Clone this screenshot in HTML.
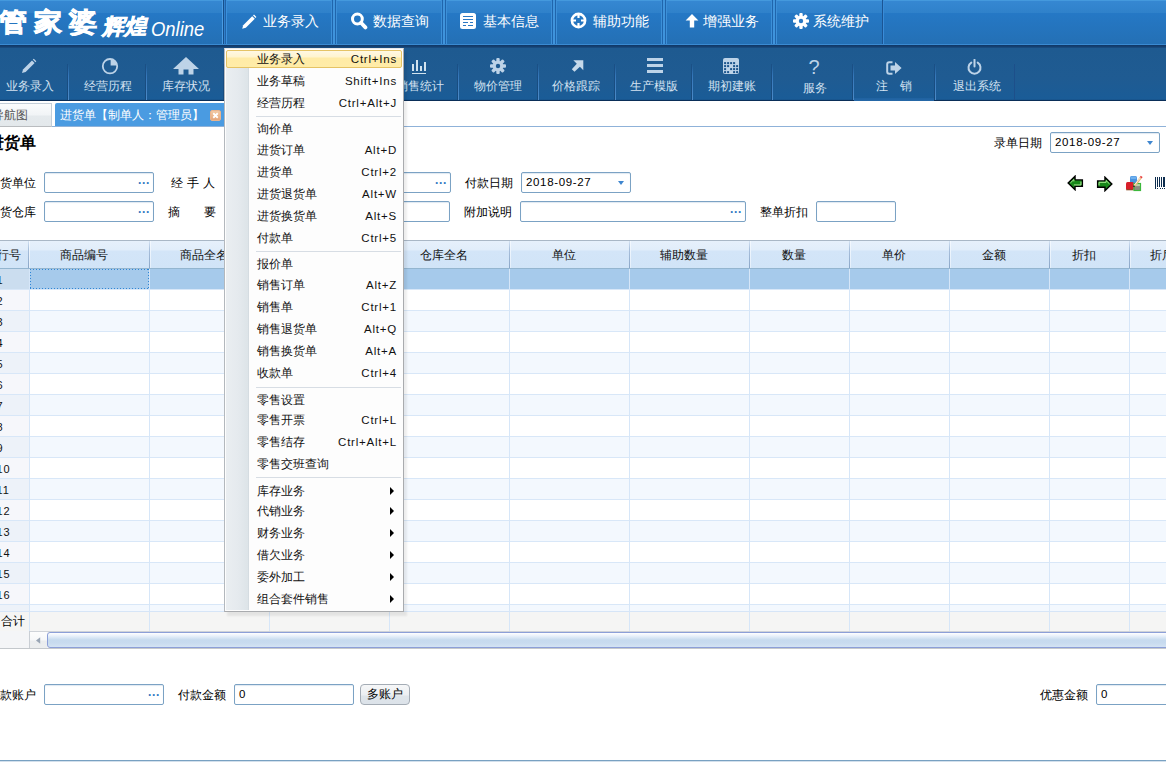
<!DOCTYPE html>
<html lang="zh">
<head>
<meta charset="utf-8">
<title>管家婆 辉煌 Online</title>
<style>
*{box-sizing:border-box;margin:0;padding:0}
html,body{width:1166px;height:781px;overflow:hidden;background:#fff}
body{position:relative;font-family:"Liberation Sans",sans-serif;font-size:12px;color:#000}
.abs{position:absolute}
/* ---------- top bar ---------- */
#top{position:absolute;left:0;top:0;width:1166px;height:45px;
 background:linear-gradient(to bottom,#4499dd 0,#4499dd 1px,#3587d2 1px,#2f81ca 13px,#2578c5 13px,#2470b5 44px,#3a8ad2 44px,#3a8ad2 45px)}
#topline{position:absolute;left:0;top:45px;width:1166px;height:3px;background:linear-gradient(to bottom,#0f3765 0,#143f70 1.500px,#1a4f83 3px)}
.vsep{position:absolute;top:0;height:44px;width:6px;margin-left:-1px;background:linear-gradient(to right,#3c90d8 0,#3c90d8 1px,#2065ac 1px,#2065ac 2px,#3f94dc 2px,#3f94dc 4px,#2065ac 4px,#2065ac 5px,#3c90d8 5px,#3c90d8 6px)}
.nav{position:absolute;top:0;height:44px;color:#fff;font-size:14px;line-height:16px;white-space:nowrap}
.nav span{position:absolute;top:13px}
.nav svg{position:absolute}
#logo1{position:absolute;left:-1px;top:3.500px;font-size:27.500px;line-height:38px;font-weight:bold;color:#fff;letter-spacing:7px;white-space:nowrap;-webkit-text-stroke:1px #fff;transform:scaleY(0.930);transform-origin:0 50%}
#logo2{position:absolute;left:102px;top:14px;font-size:22px;line-height:26px;font-weight:bold;font-style:italic;color:#fff;white-space:nowrap;-webkit-text-stroke:0.600px #fff}
#logo3{position:absolute;left:151px;top:17px;font-size:20px;line-height:24px;font-style:italic;color:#fff;white-space:nowrap;transform:scaleX(0.920);transform-origin:0 0}
/* ---------- second toolbar ---------- */
#tb2{position:absolute;left:0;top:48px;width:1166px;height:53px;background:linear-gradient(to bottom,#1e5a90 0,#1f5b92 30px,#1a5c97 51px,#164f86 52px,#0a2e58 52px,#0a2e58 53px)}
.t2{margin:0 0 0 0.500px;position:absolute;top:30px;height:16px;line-height:16px;font-size:12px;color:#d3e2f1;text-align:center;width:78px;white-space:nowrap}
.t2sep{position:absolute;top:16px;height:36px;width:2px;background:linear-gradient(to bottom,#1b5086,#174a7c) 0 0/1px 100% no-repeat,linear-gradient(to bottom,rgba(70,135,200,0) 0,#3577ba 12px,#4d8bc8 36px) 1px 0/1px 100% no-repeat}
.ic{position:absolute}
/* ---------- tabs ---------- */
#tab1{position:absolute;left:-27px;top:103px;width:79px;height:24px;border:1px solid #c3ced8;border-bottom:1px solid #b9bcbf;background:linear-gradient(to bottom,#fbfcfd 0,#f1f4f6 11px,#e5eaed 12px,#e3e8eb 23px);color:#555;font-size:12px;line-height:22px;padding-left:18px;white-space:nowrap}
#tab2{position:absolute;left:55px;top:103px;width:180px;height:24px;background:#4a9be1;border-radius:2px 0 0 0;color:#fff;font-size:12px;line-height:24.500px;padding-left:5px;white-space:nowrap}
#tabline{position:absolute;left:52px;top:126px;width:1114px;height:1px;background:#8fb2d9}
#tabx{position:absolute;left:210px;top:110px;width:11px;height:11px;border-radius:2px;background:linear-gradient(to bottom,#f1c9a5,#e5a67a);border:1px solid #e9b48d}
/* ---------- form ---------- */
.lbl{position:absolute;font-size:12px;line-height:16px;color:#000;white-space:nowrap}
.inp{position:absolute;height:21px;border:1px solid #7ba2c4;border-radius:2px;background:#fff;font-size:11.5px;line-height:19px;padding-left:4px;color:#000;white-space:nowrap;box-shadow:inset 0 1px 1px #dfe8f1}
.dots{position:absolute;right:3px;top:1.500px;color:#2f78c2;font-weight:bold;font-size:12px;letter-spacing:0px;line-height:17px}
.dd{position:absolute;right:6px;top:8px;width:0;height:0;border-left:3.800px solid transparent;border-right:3.800px solid transparent;border-top:4px solid #3f86cf}
#title{position:absolute;left:-12px;top:133px;font-size:16px;font-weight:bold;line-height:20px;white-space:nowrap}

/* ---------- grid ---------- */
#grid{position:absolute;left:0;top:0;width:1166px;height:0}
#ghead{position:absolute;left:0;top:240px;width:1166px;height:29px;border-top:1px solid #a9b7c6;border-bottom:1px solid #93b5cf;background:linear-gradient(to bottom,#e6f0fb 0,#e1edfa 9px,#d3e5f8 10px,#d1e4f7 27px)}
.gh{position:absolute;top:0;height:27px;line-height:28px;font-size:12px;text-align:center;padding-right:12px;white-space:nowrap;color:#111}
.gh:after{content:"";position:absolute;right:-1px;top:0;width:2px;height:27px;background:linear-gradient(to bottom,#d3e2f3 0,#a9c0dc 8px,#8ba7c8 27px) 0 0/1px 100% no-repeat,linear-gradient(to bottom,#f3f8fe,#e4effb) 1px 0/1px 100% no-repeat}
.gr{position:absolute;left:0;width:1166px;height:21px;border-bottom:1px solid #d8e7f8;background:#fff}
.gr.odd{background:#f3f8fe}
.gr.sel{background:#a6caeb}
.gr .rn{position:absolute;left:-4px;top:0;width:34px;height:20px;line-height:22px;font-size:11px;letter-spacing:0.900px;background:#f6f7fb;color:#111;padding-left:0.500px}
.gr.odd .rn{background:#edf2f9}
.gr.sel .rn{background:#cbddef}
#gsum{position:absolute;left:0;top:611px;width:1166px;height:20px;background:#f5f5f4;border-top:1px solid #d6e5f7}
#gsum span{position:absolute;left:1px;top:1px;font-size:12px;line-height:16px}
#gvl i{position:absolute;top:269px;width:1px;height:362px;background:#d6e6f8}
#gfocus{position:absolute;left:30px;top:269px;width:119px;height:20px;background:repeating-linear-gradient(to right,#2f86d6 0,#2f86d6 1.500px,transparent 1.500px,transparent 3px) 0 0/100% 1px no-repeat,repeating-linear-gradient(to right,#2f86d6 0,#2f86d6 1.500px,transparent 1.500px,transparent 3px) 0 100%/100% 1px no-repeat,repeating-linear-gradient(to bottom,#2f86d6 0,#2f86d6 1.500px,transparent 1.500px,transparent 3px) 0 0/1px 100% no-repeat,repeating-linear-gradient(to bottom,#2f86d6 0,#2f86d6 1.500px,transparent 1.500px,transparent 3px) 100% 0/1px 100% no-repeat}
#gscroll{position:absolute;left:0;top:631px;width:1166px;height:18px;background:#f4f4f3;border-top:1px solid #cfd3d8;border-bottom:1px solid #c4c8cc}
#gsl{position:absolute;left:0;top:-1px;width:30px;height:17px;background:#f4f5f7;border-right:1px solid #c9ced4}
#gsb{position:absolute;left:30px;top:0;width:17px;height:16px;background:linear-gradient(to bottom,#fdfdfd 0,#f7f8f9 8px,#ebedef 9px,#eceeef 16px)}
#gst{position:absolute;left:47px;top:0;width:1140px;height:16px;border:1px solid #8c9fd8;border-radius:3px;background:linear-gradient(to bottom,#ffffff 0,#e8f0fa 3px,#c6daee 7px,#c8dbef 10px,#d3e3f3 14px)}
#btn{position:absolute;left:360px;top:684px;width:50px;height:21px;border:1px solid #a4acb5;border-radius:4px;background:linear-gradient(to bottom,#f6f7f8 0,#eceff2 10px,#dfe5ea 11px,#dbe2e9 20px);font-size:12px;line-height:19px;text-align:center;white-space:nowrap}

/* ---------- menu ---------- */
#menu{position:absolute;left:224px;top:48px;width:180px;height:564px;background:#fdfdfd;border:1px solid #a9abae;border-left-color:#b3b8bd;border-top-color:#e8e8e8;box-shadow:3px 4px 2px rgba(0,0,0,.07)}
#mgut{position:absolute;left:1px;top:2px;width:23px;height:559px;background:linear-gradient(to right,#eaeef1 0,#e5eaee 12px,#dde4e8 22px,#ccd4da 23px)}
#mhi{position:absolute;left:1px;top:1px;width:176px;height:18px;border:1px solid #e5c365;border-radius:2px;background:linear-gradient(to bottom,#fff8e4 0,#fff4cf 6px,#ffeba6 7px,#ffeca8 16px)}
.mi{position:absolute;left:0;width:178px;height:18px;line-height:18px;font-size:12px;color:#111;white-space:nowrap}
.mt{position:absolute;left:32px;top:-1px}
.mk{position:absolute;right:6px;top:-1px;font-size:11.500px;letter-spacing:0.780px}
.marr{position:absolute;left:165px;top:4px;width:0;height:0;border-top:4px solid transparent;border-bottom:4px solid transparent;border-left:4.300px solid #000}
.msep{position:absolute;left:31px;width:145px;height:1px;background:#d7dde4}
</style>
</head>
<body>
<!-- top bar -->
<div id="top">
 <div id="logo1">管家婆</div>
 <div id="logo2">辉煌</div>
 <div id="logo3">Online</div>
</div>
<div id="topline"></div>
<!-- top nav -->
<div class="abs" style="left:222px;top:0;width:5px;height:44px;background:linear-gradient(to right,#4a9ce4 0,#4a9ce4 1px,#174f8a 1px,#174f8a 2px,#3080cc 2px,#3080cc 3px,#2263a8 3px,#2263a8 4px,#3a90dc 4px,#3a90dc 5px)"></div>
<div class="vsep" style="left:332px"></div>
<div class="vsep" style="left:442px"></div>
<div class="vsep" style="left:552px"></div>
<div class="vsep" style="left:662px"></div>
<div class="vsep" style="left:772px"></div>
<div class="abs" style="left:882px;top:0;width:2px;height:44px;background:linear-gradient(to right,#1b5594 0,#1b5594 1px,#3a8cd8 1px,#3a8cd8 2px)"></div>
<div class="nav" style="left:226px;width:106px">
 <svg style="left:15px;top:14px" width="16" height="16" viewBox="0 0 16 16"><path d="M1.2 14.8 L2.2 11.2 L11.2 2.2 L13.8 4.8 L4.8 13.8 Z" fill="#fff"/><path d="M12 1.4 L13 0.6 L15.4 3 L14.6 4 Z" fill="#fff"/></svg>
 <span style="left:37px">业务录入</span></div>
<div class="nav" style="left:336px;width:106px">
 <svg style="left:15px;top:12px" width="17" height="18" viewBox="0 0 17 18"><circle cx="6.400" cy="7" r="4.900" fill="none" stroke="#fff" stroke-width="3"/><path d="M10 10.800 L14.400 15.400" stroke="#fff" stroke-width="3.800" stroke-linecap="round"/></svg>
 <span style="left:37px">数据查询</span></div>
<div class="nav" style="left:446px;width:106px">
 <svg style="left:14px;top:13px" width="16" height="16" viewBox="0 0 16 16"><rect x="0" y="0" width="16" height="16" rx="2.5" fill="#fff"/><path d="M3 3.5h10M3 6.5h10M3 9.5h5M10 9.5h3M3 12.5h3M8 12.5h5" stroke="#2a78c4" stroke-width="1.2"/></svg>
 <span style="left:37px">基本信息</span></div>
<div class="nav" style="left:556px;width:106px">
 <svg style="left:14px;top:12px" width="17" height="17" viewBox="0 0 17 17"><circle cx="8.5" cy="8.5" r="6.6" fill="none" stroke="#fff" stroke-width="2.6"/><path d="M8.5 1v5M8.5 11v5M1 8.500h5M11 8.5h5" stroke="#fff" stroke-width="2.2"/></svg>
 <span style="left:37px">辅助功能</span></div>
<div class="nav" style="left:666px;width:106px">
 <svg style="left:19px;top:14px" width="14" height="14" viewBox="0 0 14 14"><path d="M7 0 L13.4 6.6 H9.2 V13.4 H4.800 V6.6 H0.6 Z" fill="#fff"/></svg>
 <span style="left:37px">增强业务</span></div>
<div class="nav" style="left:776px;width:106px">
 <svg style="left:17px;top:13px" width="16" height="16" viewBox="0 0 16 16"><g fill="#fff"><circle cx="8" cy="8" r="5.3"/><g id="tg"><rect x="6.3" y="0" width="3.4" height="16" rx="1"/></g><rect x="6.3" y="0" width="3.4" height="16" rx="1" transform="rotate(45 8 8)"/><rect x="6.3" y="0" width="3.4" height="16" rx="1" transform="rotate(90 8 8)"/><rect x="6.3" y="0" width="3.4" height="16" rx="1" transform="rotate(135 8 8)"/></g><circle cx="8" cy="8" r="2.2" fill="#2a78c4"/></svg>
 <span style="left:37px">系统维护</span></div>

<!-- second toolbar -->
<div id="tb2">
 <div class="t2sep" style="left:67px"></div>
 <div class="t2sep" style="left:145px"></div>
 <div class="t2sep" style="left:223px"></div>
 <div class="t2sep" style="left:301px"></div>
 <div class="t2sep" style="left:379px"></div>
 <div class="t2sep" style="left:457px"></div>
 <div class="t2sep" style="left:537px"></div>
 <div class="t2sep" style="left:614px"></div>
 <div class="t2sep" style="left:691px"></div>
 <div class="t2sep" style="left:771px"></div>
 <div class="t2sep" style="left:852px"></div>
 <div class="t2sep" style="left:934px"></div>
 <div class="t2sep" style="left:1014px;background:#1d4f8a;width:1px"></div>
 <div class="abs" style="left:854px;top:50px;width:80px;height:3px;background:linear-gradient(to bottom,#1f62a0,#2668a8)"></div>
 <div class="t2" style="left:-10px;top:30px">业务录入</div>
 <div class="t2" style="left:68px;top:30px">经营历程</div>
 <div class="t2" style="left:146px;top:30px">库存状况</div>
 <div class="t2" style="left:224px;top:30px">往来状况</div>
 <div class="t2" style="left:302px;top:30px">销售单</div>
 <div class="t2" style="left:380px;top:30px">销售统计</div>
 <div class="t2" style="left:458px;top:30px">物价管理</div>
 <div class="t2" style="left:536px;top:30px">价格跟踪</div>
 <div class="t2" style="left:614px;top:30px">生产模版</div>
 <div class="t2" style="left:692px;top:30px">期初建账</div>
 <div class="t2" style="left:775px;top:32px">服务</div>
 <div class="t2" style="left:854px;top:30px">注　销</div>
 <div class="t2" style="left:937px;top:30px">退出系统</div>
 <svg class="ic" style="left:21px;top:10px" width="16" height="16" viewBox="0 0 16 16"><path d="M1 15 L2 11.4 L11 2.400 L13.600 5 L4.600 14 Z" fill="#bdd3e8"/><path d="M11.800 1.600 L12.800 0.700 L15.300 3.200 L14.400 4.200 Z" fill="#bdd3e8"/></svg>
 <svg class="ic" style="left:101px;top:9px" width="18" height="18" viewBox="0 0 18 18"><circle cx="9" cy="9.200" r="7.200" fill="none" stroke="#bdd3e8" stroke-width="1.800"/><path d="M9.600 8.600 V2.200 A7 7 0 0 1 16 8.600 Z" fill="#bdd3e8"/></svg>
 <svg class="ic" style="left:173px;top:9px" width="26" height="18" viewBox="0 0 26 18"><path d="M13 0 L26 12 H20.500 V17.500 H15.500 V12.500 H10.500 V17.500 H5.500 V12 H0 Z" fill="#bdd3e8"/></svg>
 <svg class="ic" style="left:412px;top:12px" width="14" height="14" viewBox="0 0 14 14" shape-rendering="crispEdges"><g fill="#d2e3ef"><rect x="0" y="4" width="2" height="7"/><rect x="4" y="0" width="2" height="11"/><rect x="8" y="6" width="2" height="5"/><rect x="12" y="2" width="2" height="9"/><rect x="0" y="13" width="14" height="1"/></g></svg>
 <svg class="ic" style="left:490px;top:10px" width="16" height="16" viewBox="0 0 16 16"><g fill="#bdd3e8"><circle cx="8" cy="8" r="5.300"/><rect x="6.300" y="0" width="3.400" height="16" rx="1"/><rect x="6.300" y="0" width="3.400" height="16" rx="1" transform="rotate(45 8 8)"/><rect x="6.300" y="0" width="3.400" height="16" rx="1" transform="rotate(90 8 8)"/><rect x="6.300" y="0" width="3.400" height="16" rx="1" transform="rotate(135 8 8)"/></g><circle cx="8" cy="8" r="2.200" fill="#1f5b91"/></svg>
 <svg class="ic" style="left:571px;top:11.500px" width="13" height="12" viewBox="0 0 13 12"><path d="M2.300 0.200 H12.300 V10.200 L8.900 6.800 L3.500 11.800 L0.800 9.200 L5.800 3.700 Z" fill="#c6d9ea"/></svg>
 <svg class="ic" style="left:647px;top:10px" width="16" height="15" viewBox="0 0 16 15"><path d="M0 1.600h16M0 7.500h16M0 13.400h16" stroke="#bdd3e8" stroke-width="3"/></svg>
 <svg class="ic" style="left:723px;top:10px" width="16" height="16" viewBox="0 0 16 16"><rect x="0" y="0" width="16" height="16" rx="2" fill="#bdd3e8"/><g fill="#1a548c"><rect x="1.1" y="4.1" width="2" height="2"/><rect x="4.1" y="4.1" width="2" height="2"/><rect x="7.1" y="4.1" width="2" height="2"/><rect x="10.1" y="4.1" width="2" height="2"/><rect x="1.1" y="7.1" width="2" height="2"/><rect x="4.1" y="7.1" width="2" height="2"/><rect x="10.1" y="7.1" width="2" height="2"/><rect x="13.1" y="7.1" width="2" height="2"/><rect x="1.1" y="10.1" width="2" height="2"/><rect x="7.1" y="10.1" width="2" height="2"/><rect x="10.1" y="10.1" width="2" height="2"/><rect x="13.1" y="10.1" width="2" height="2"/><rect x="1.1" y="13.1" width="2" height="2"/><rect x="4.1" y="13.1" width="2" height="2"/><rect x="10.1" y="13.1" width="2" height="2"/><rect x="13.1" y="13.1" width="2" height="2"/></g></svg>
 <div class="ic" style="left:804px;top:8.500px;width:20px;text-align:center;font-size:20px;line-height:20px;color:#bdd3e8">?</div>
 <svg class="ic" style="left:886px;top:12.500px" width="16" height="14" viewBox="0 0 16 14"><path d="M6.500 1.200 H3.200 Q1.200 1.200 1.200 3.200 V10.800 Q1.200 12.800 3.200 12.800 H6.500" fill="none" stroke="#bdd3e8" stroke-width="2"/><path d="M4.500 4.500 H9 V1 L15.600 7 L9 13 V9.500 H4.500 Z" fill="#bdd3e8"/></svg>
 <svg class="ic" style="left:967px;top:10.500px" width="15" height="16" viewBox="0 0 15 16"><path d="M4.300 3.600 A6 6 0 1 0 10.700 3.600" fill="none" stroke="#bdd3e8" stroke-width="2" stroke-linecap="round"/><path d="M7.500 0.800 V7.500" stroke="#bdd3e8" stroke-width="2" stroke-linecap="round"/></svg>
</div>

<!-- tabs -->
<div id="tab1">导航图</div>
<div id="tab2">进货单【制单人：管理员】</div>
<div id="tabx"><svg width="9" height="9" viewBox="0 0 10 10" style="position:absolute;left:0;top:0"><path d="M2.500 2.500 L7.500 7.500 M7.500 2.500 L2.500 7.500" stroke="#fff" stroke-width="2"/></svg></div>
<div id="tabline"></div>

<!-- form -->
<div id="title">进货单</div>
<div class="lbl" style="left:994px;top:135px">录单日期</div>
<div class="inp" style="left:1050px;top:132px;width:110px"><span style="letter-spacing:0.650px">2018-09-27</span><i class="dd"></i></div>
<div class="lbl" style="left:-12px;top:175px">供货单位</div>
<div class="inp" style="left:44px;top:172px;width:110px"><b class="dots">···</b></div>
<div class="lbl" style="left:171px;top:175px;letter-spacing:4px">经手人</div>
<div class="inp" style="left:341px;top:172px;width:110px"><b class="dots">···</b></div>
<div class="lbl" style="left:465px;top:175px">付款日期</div>
<div class="inp" style="left:521px;top:172px;width:110px"><span style="letter-spacing:0.650px">2018-09-27</span><i class="dd"></i></div>
<div class="lbl" style="left:-12px;top:204px">收货仓库</div>
<div class="inp" style="left:44px;top:201px;width:110px"><b class="dots">···</b></div>
<div class="lbl" style="left:168px;top:204px">摘<span style="display:inline-block;width:24px"></span>要</div>
<div class="inp" style="left:230px;top:201px;width:220px"></div>
<div class="lbl" style="left:464px;top:204px">附加说明</div>
<div class="inp" style="left:520px;top:201px;width:226px"><b class="dots">···</b></div>
<div class="lbl" style="left:760px;top:204px">整单折扣</div>
<div class="inp" style="left:816px;top:201px;width:80px"></div>
<!-- small icons -->
<svg class="abs" style="left:1066.500px;top:174.500px" width="17" height="16" viewBox="0 0 18 17"><path d="M8.500 1.200 L1.200 8.400 L8.500 15.600 V12 H16.300 V5.200 H8.500 Z" fill="#18881a" stroke="#000" stroke-width="1.500" stroke-linejoin="miter"/><path d="M3.600 8.400 L7.300 4.800 V6.800 M7.300 10.600 H14.800 V7" fill="none" stroke="#b4f49c" stroke-width="1"/></svg>
<svg class="abs" style="left:1095.500px;top:175.500px" width="17" height="16" viewBox="0 0 18 17"><path d="M9.500 1.200 L16.800 8.400 L9.500 15.600 V12 H1.700 V5.200 H9.500 Z" fill="#18881a" stroke="#000" stroke-width="1.500" stroke-linejoin="miter"/><path d="M3.200 10 V6.700 H10.700 V4.800 L14.300 8.400" fill="none" stroke="#b4f49c" stroke-width="1"/></svg>
<svg class="abs" style="left:1125px;top:175px" width="18" height="17" viewBox="0 0 18 17"><rect x="5" y="1" width="7" height="7" rx="1.500" fill="#4a94e0"/><rect x="5.500" y="1.500" width="6" height="2.500" rx="1" fill="#6fb0ee"/><rect x="1" y="7" width="7.800" height="8" rx="1.500" fill="#d81f2a"/><path d="M1.200 14.800 H8.500" stroke="#8a4a20" stroke-width="1"/><rect x="9" y="8.500" width="6.500" height="7" fill="#8d8d82" stroke="#3cb83c" stroke-width="1.200"/><rect x="9.600" y="9.100" width="5.300" height="2" fill="#b6d6a8"/><path d="M8.600 10.200 L14.800 2 L16.600 3.400 L10.400 11.400 Z" fill="#e9b97a"/><path d="M9.500 10 L15.500 2.500" stroke="#fff" stroke-width="0.800"/><path d="M14.800 2 L15.800 0.700 L17.600 2.100 L16.600 3.400 Z" fill="#e8413f"/><path d="M8.600 10.200 L8 12 L10.400 11.400 Z" fill="#222"/></svg>
<svg class="abs" style="left:1154px;top:176px" width="12" height="14" viewBox="0 0 12 14" shape-rendering="crispEdges"><g fill="#0c2c4e"><rect x="1" y="1" width="1" height="11.500"/><rect x="3" y="1" width="1" height="10"/><rect x="5" y="1" width="1" height="10"/><rect x="7" y="1" width="1" height="10"/><rect x="9" y="1" width="2" height="10"/><rect x="3" y="12" width="1" height="1"/><rect x="5.500" y="12" width="1" height="1"/><rect x="8" y="12" width="1" height="1"/><rect x="10" y="12" width="1" height="1"/></g></svg>
<!-- grid -->
<div id="grid">
 <div id="ghead">
  <div class="gh" style="left:-12px;width:41px;padding-right:0">行号</div>
  <div class="gh" style="left:30px;width:120px">商品编号</div>
  <div class="gh" style="left:150px;width:120px">商品全名</div>
  <div class="gh" style="left:270px;width:120px">商品规格</div>
  <div class="gh" style="left:390px;width:120px">仓库全名</div>
  <div class="gh" style="left:510px;width:120px">单位</div>
  <div class="gh" style="left:630px;width:120px">辅助数量</div>
  <div class="gh" style="left:750px;width:100px">数量</div>
  <div class="gh" style="left:850px;width:100px">单价</div>
  <div class="gh" style="left:950px;width:100px">金额</div>
  <div class="gh" style="left:1050px;width:80px">折扣</div>
  <div class="gh" style="left:1130px;width:100px">折后单价</div>
 </div>
 <div class="gr odd sel" style="top:269px"><span class="rn">1</span></div>
 <div class="gr" style="top:290px"><span class="rn">2</span></div>
 <div class="gr odd" style="top:311px"><span class="rn">3</span></div>
 <div class="gr" style="top:332px"><span class="rn">4</span></div>
 <div class="gr odd" style="top:353px"><span class="rn">5</span></div>
 <div class="gr" style="top:374px"><span class="rn">6</span></div>
 <div class="gr odd" style="top:395px"><span class="rn">7</span></div>
 <div class="gr" style="top:416px"><span class="rn">8</span></div>
 <div class="gr odd" style="top:437px"><span class="rn">9</span></div>
 <div class="gr" style="top:458px"><span class="rn">10</span></div>
 <div class="gr odd" style="top:479px"><span class="rn">11</span></div>
 <div class="gr" style="top:500px"><span class="rn">12</span></div>
 <div class="gr odd" style="top:521px"><span class="rn">13</span></div>
 <div class="gr" style="top:542px"><span class="rn">14</span></div>
 <div class="gr odd" style="top:563px"><span class="rn">15</span></div>
 <div class="gr" style="top:584px"><span class="rn">16</span></div>
 <div class="gr odd" style="top:605px"><span class="rn">17</span></div>
 <div id="gsum"><span>合计</span></div>
 <div id="gvl"><i style="left:29px"></i><i style="left:149px"></i><i style="left:269px"></i><i style="left:389px"></i><i style="left:509px"></i><i style="left:629px"></i><i style="left:749px"></i><i style="left:849px"></i><i style="left:949px"></i><i style="left:1049px"></i><i style="left:1129px"></i></div>
 <div id="gfocus"></div>
 <div id="gscroll"><div id="gsl"></div><div id="gsb"><svg width="17" height="16" viewBox="0 0 17 16" style="position:absolute;left:0;top:0"><path d="M10.200 5.200 L6 8.500 L10.200 11.800 Z" fill="#9aa6b5"/></svg></div><div id="gst"></div></div>
</div>

<!-- bottom -->
<div class="lbl" style="left:-12px;top:687px">付款账户</div>
<div class="inp" style="left:44px;top:684px;width:120px"><b class="dots">···</b></div>
<div class="lbl" style="left:178px;top:687px">付款金额</div>
<div class="inp" style="left:234px;top:684px;width:120px">0</div>
<div id="btn">多账户</div>
<div class="lbl" style="left:1040px;top:687px">优惠金额</div>
<div class="inp" style="left:1096px;top:684px;width:120px">0</div>
<div class="abs" style="left:0;top:760px;width:1166px;height:2px;background:linear-gradient(to bottom,#79a1c2 0,#79a1c2 1px,#d3e0ec 1px,#d3e0ec 2px)"></div>

<!-- menu -->
<div id="menu">
 <div id="mgut"></div>
 <div id="mhi"></div>
 <div class="mi" style="top:2.0px"><span class="mt">业务录入</span><span class="mk">Ctrl+Ins</span></div>
 <div class="mi" style="top:24.0px"><span class="mt">业务草稿</span><span class="mk">Shift+Ins</span></div>
 <div class="mi" style="top:46.0px"><span class="mt">经营历程</span><span class="mk">Ctrl+Alt+J</span></div>
 <div class="msep" style="top:67px"></div>
 <div class="mi" style="top:72.0px"><span class="mt">询价单</span></div>
 <div class="mi" style="top:93.0px"><span class="mt">进货订单</span><span class="mk">Alt+D</span></div>
 <div class="mi" style="top:115.0px"><span class="mt">进货单</span><span class="mk">Ctrl+2</span></div>
 <div class="mi" style="top:137.0px"><span class="mt">进货退货单</span><span class="mk">Alt+W</span></div>
 <div class="mi" style="top:159.0px"><span class="mt">进货换货单</span><span class="mk">Alt+S</span></div>
 <div class="mi" style="top:181.0px"><span class="mt">付款单</span><span class="mk">Ctrl+5</span></div>
 <div class="msep" style="top:202px"></div>
 <div class="mi" style="top:207.0px"><span class="mt">报价单</span></div>
 <div class="mi" style="top:228.0px"><span class="mt">销售订单</span><span class="mk">Alt+Z</span></div>
 <div class="mi" style="top:250.0px"><span class="mt">销售单</span><span class="mk">Ctrl+1</span></div>
 <div class="mi" style="top:272.0px"><span class="mt">销售退货单</span><span class="mk">Alt+Q</span></div>
 <div class="mi" style="top:294.0px"><span class="mt">销售换货单</span><span class="mk">Alt+A</span></div>
 <div class="mi" style="top:316.0px"><span class="mt">收款单</span><span class="mk">Ctrl+4</span></div>
 <div class="msep" style="top:338px"></div>
 <div class="mi" style="top:342.5px"><span class="mt">零售设置</span></div>
 <div class="mi" style="top:363.0px"><span class="mt">零售开票</span><span class="mk">Ctrl+L</span></div>
 <div class="mi" style="top:385.0px"><span class="mt">零售结存</span><span class="mk">Ctrl+Alt+L</span></div>
 <div class="mi" style="top:406.5px"><span class="mt">零售交班查询</span></div>
 <div class="msep" style="top:428px"></div>
 <div class="mi" style="top:434.0px"><span class="mt">库存业务</span><i class="marr"></i></div>
 <div class="mi" style="top:454.0px"><span class="mt">代销业务</span><i class="marr"></i></div>
 <div class="mi" style="top:476.0px"><span class="mt">财务业务</span><i class="marr"></i></div>
 <div class="mi" style="top:498.0px"><span class="mt">借欠业务</span><i class="marr"></i></div>
 <div class="mi" style="top:520.0px"><span class="mt">委外加工</span><i class="marr"></i></div>
 <div class="mi" style="top:542.0px"><span class="mt">组合套件销售</span><i class="marr"></i></div>
</div>

</body>
</html>
